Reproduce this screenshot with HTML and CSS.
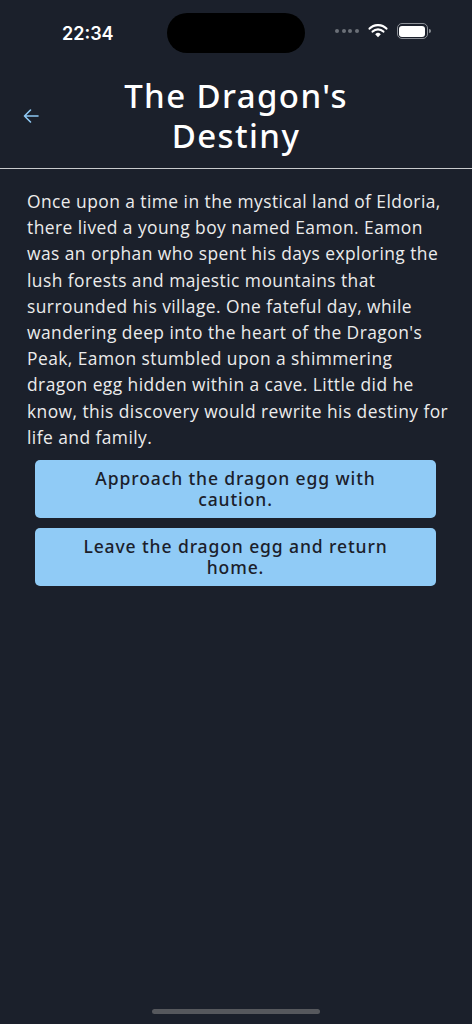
FILE: index.html
```html
<!DOCTYPE html>
<html lang="en">
<head>
<meta charset="utf-8">
<title>The Dragon's Destiny</title>
<link rel="stylesheet" href="styles.css">
</head>
<body>
<div class="screen">
  <div class="status">
    <span class="time">22:34</span>
    <div class="island"></div>
    <div class="status-right">
      <span class="dots"><i></i><i></i><i></i><i></i></span>
      <svg class="wifi" width="20" height="14" viewBox="0 0 20 14">
        <path d="M10 13.2 L7.2 10.2 A4 4 0 0 1 12.8 10.2 Z" fill="#fff"/>
        <path d="M4.6 7.6 A7.6 7.6 0 0 1 15.4 7.6" stroke="#fff" stroke-width="2.2" fill="none" stroke-linecap="round"/>
        <path d="M1.6 4.6 A11.8 11.8 0 0 1 18.4 4.6" stroke="#fff" stroke-width="2.2" fill="none" stroke-linecap="round"/>
      </svg>
      <span class="battery"><span class="battery-fill"></span></span>
    </div>
  </div>
  <header class="header">
    <button class="back" aria-label="Back">
      <svg width="18" height="16" viewBox="0 0 18 16">
        <path d="M16 8 H2.5 M8.5 2 L2.5 8 L8.5 14" stroke="#8fc8f3" stroke-width="1.6" fill="none" stroke-linecap="round" stroke-linejoin="round"/>
      </svg>
    </button>
    <h1 class="title">The Dragon's Destiny</h1>
    <span></span>
  </header>
  <main class="content">
    <p class="story">Once upon a time in the mystical land of Eldoria,<br>
there lived a young boy named Eamon. Eamon<br>
was an orphan who spent his days exploring the<br>
lush forests and majestic mountains that<br>
surrounded his village. One fateful day, while<br>
wandering deep into the heart of the Dragon's<br>
Peak, Eamon stumbled upon a shimmering<br>
dragon egg hidden within a cave. Little did he<br>
know, this discovery would rewrite his destiny for<br>
life and family.</p>
    <div class="choices">
      <button class="choice">Approach the dragon egg with caution.</button>
      <button class="choice">Leave the dragon egg and return home.</button>
    </div>
  </main>
  <div class="home-indicator"></div>
</div>
</body>
</html>
```

FILE: styles.css
```css
* { box-sizing: border-box; }
html, body { margin: 0; padding: 0; }
body {
  background: #1b202b;
  font-family: "Open Sans", "Noto Sans", sans-serif;
  color: #f2f2f2;
}
.screen {
  width: 472px;
  height: 1024px;
  position: relative;
  display: flex;
  flex-direction: column;
}
.status {
  height: 66px;
  display: flex;
  align-items: center;
  padding: 0 0 0 62px;
  position: relative;
}
.time {
  font-family: "Inter", "Liberation Sans", sans-serif;
  font-weight: 600;
  font-size: 18px;
  color: #fff;
  width: 53px;
}
.island {
  position: absolute;
  left: 167px;
  top: 13px;
  width: 138px;
  height: 40px;
  border-radius: 20px;
  background: #000;
}
.status-right {
  position: absolute;
  left: 335px;
  top: 23px;
  display: flex;
  align-items: center;
  gap: 9px;
}
.dots { display: flex; gap: 2.5px; }
.dots i {
  display: block;
  width: 4px;
  height: 4px;
  border-radius: 50%;
  background: #6b6f78;
}
.wifi { display: block; }
.battery {
  width: 31px;
  height: 16px;
  border: 1.5px solid #8c9097;
  border-radius: 5px;
  padding: 1.5px;
  position: relative;
  display: block;
}
.battery::after {
  content: "";
  position: absolute;
  right: -4px;
  top: 5px;
  width: 2px;
  height: 4px;
  border-radius: 0 2px 2px 0;
  background: #8c9097;
}
.battery-fill {
  display: block;
  width: 100%;
  height: 100%;
  border-radius: 3px;
  background: #fff;
}
.header {
  display: grid;
  grid-template-columns: 90px 1fr 90px;
  align-items: center;
  border-bottom: 1.5px solid #c9cacc;
  height: 103px;
  padding-bottom: 2px;
}
.back {
  background: none;
  border: 0;
  padding: 0 0 0 22px;
  display: flex;
  align-items: center;
}
.title {
  margin: 0;
  text-align: center;
  font-family: "Noto Sans", "Open Sans", sans-serif;
  font-size: 33px;
  line-height: 40px;
  font-weight: 500;
  color: #fff;
  letter-spacing: 1.4px;
}
.content {
  padding: 19px 12px 0 27px;
}
.story {
  margin: 0;
  font-size: 17.4px;
  line-height: 26.2px;
  color: #ececec;
  letter-spacing: 0.45px;
}
.choices {
  display: flex;
  flex-direction: column;
  gap: 10px;
  margin: 10px 24px 0 8px;
}
.choice {
  background: #90cbf6;
  border: 0;
  border-radius: 5px;
  min-height: 58px;
  padding: 8px 30px;
  font-family: "Noto Sans", "Open Sans", sans-serif;
  font-size: 17.5px;
  line-height: 21px;
  font-weight: 500;
  color: #1b202b;
  letter-spacing: 0.9px;
  text-align: center;
}
.home-indicator {
  position: absolute;
  left: 152px;
  bottom: 10px;
  width: 168px;
  height: 5px;
  border-radius: 3px;
  background: #56585d;
}
```
